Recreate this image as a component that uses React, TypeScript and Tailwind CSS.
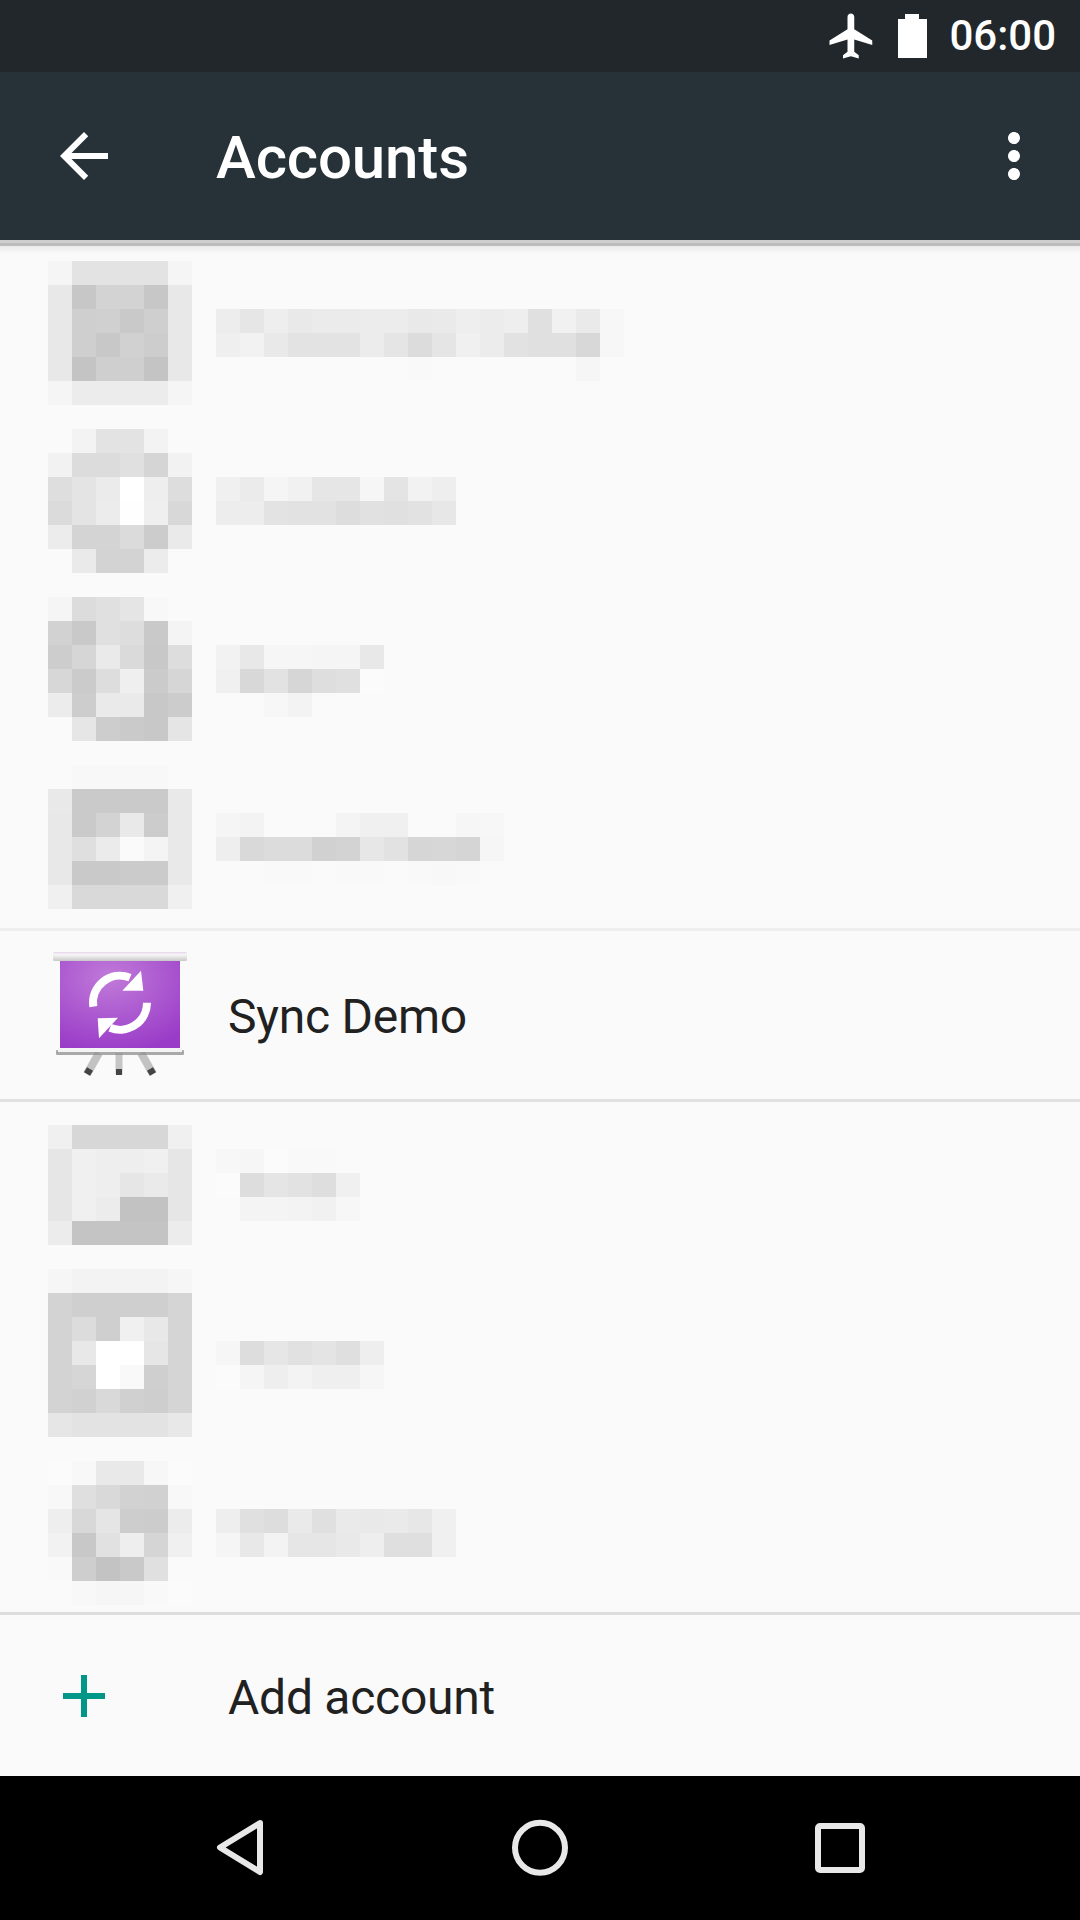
const font = "font-['Roboto',sans-serif]";

// grey levels read off the blurred blocks, one string per row of 24px cells
const accounts: { icon: string[]; label: string[]; labelTop: string }[] = [
  {
    icon: ['f5 e3 e3 e3 e3 f5', 'e8 c7 d3 d3 c7 e8', 'e8 cf d0 c9 cf e8', 'e8 cf c8 d1 cd e8', 'e8 c4 cf cf c4 e8', 'f5 ec ec ec ec f5'],
    label: [
      'ed e6 ee e9 eb eb ec ec e9 ea ee ec ee e0 f1 ea f7',
      'ef f2 e9 e3 e3 e3 ec e5 dc e5 f0 ec e2 e0 e0 d8 f7',
      'fa fa fa fa fa fa fa fa f9 fa fa fa fa fa fa f6 fa',
    ],
    labelTop: 'mt-12',
  },
  {
    icon: ['fa f3 e3 e3 f3 fa', 'f2 dc dc e0 d5 f2', 'de e4 eb ff ee dd', 'db e4 ec fe ef d8', 'ec d4 d4 db cc ea', 'fa ea d3 d3 ec fa'],
    label: ['f0 eb f5 f1 e6 e6 f6 e4 f2 ee', 'ed ed e3 e2 e2 dd e1 e0 e2 e7'],
    labelTop: 'mt-12',
  },
  {
    icon: ['f5 dc e0 e5 f8 fa', 'd2 c9 e0 dd c9 f4', 'cd d6 ea da c8 dd', 'd7 cb dd ef cb d6', 'ec cd ea ea c8 cc', 'fa e6 cd ca c8 e5'],
    label: ['f2 e8 f6 f6 f5 f5 e8', 'f0 d8 e2 d6 de e0 fb', 'fa fa f7 f3 fa fa fa'],
    labelTop: 'mt-12',
  },
  {
    icon: ['fa f8 f8 f8 f8 fa', 'e9 ca ca ca ca e9', 'e8 ca d3 e9 cc e9', 'e8 df eb fa f4 e9', 'e8 c9 c9 cb cb e9', 'f0 d9 d9 d9 d9 f0'],
    label: ['f5 f3 fa fa fa f4 f0 f0 fa fa f6 f7', 'ee d9 dc dc d1 d3 e7 e2 d6 d7 d5 f6', 'fa fa f9 f9 fa f9 f9 fa f9 f8 f9 fa'],
    labelTop: 'mt-12',
  },
];

const otherAccounts: typeof accounts = [
  {
    icon: ['f0 d7 d7 d7 d7 f0', 'e6 f0 ee ee f0 e6', 'e6 f0 ee e6 ea e6', 'e6 f0 ec c2 c2 e6', 'ec c4 c4 c4 c4 ec'],
    label: ['f7 f6 fb f9 f9 fa', 'fb dd e5 e2 de f0', 'fa f4 f4 f3 f1 f7'],
    labelTop: 'mt-6',
  },
  {
    icon: ['f6 f3 f3 f3 f3 f6', 'd3 cf cf cf cf d5', 'd3 dc cf f0 e8 d5', 'd3 e8 ff ff e6 d5', 'd3 d6 ff f9 cf d5', 'd3 d1 d9 d0 ce d5', 'e6 e3 e3 e3 e3 e8'],
    label: ['f6 dd e6 e1 e4 df ee', 'fb f5 ee f3 ef ef f6'],
    labelTop: 'mt-[72px]',
  },
  {
    icon: ['fb f8 e9 e9 f7 fb', 'f8 df d9 d2 d1 f8', 'ee d8 e5 cd cc ec', 'f2 c8 e1 ee d5 f0', 'f9 ce c3 c9 e0 fa', 'fa f8 f6 f6 f9 fb'],
    label: ['ee e0 dd ea e0 ea e9 ea e7 f0', 'f5 e8 f3 e6 e6 e9 ee df df f0'],
    labelTop: 'mt-12',
  },
];

function Mosaic({ rows }: { rows: string[] }) {
  return (
    <div className="flex flex-col">
      {rows.map((row, i) => (
        <div key={i} className="flex">
          {row.split(' ').map((g, j) => (
            <div key={j} className="w-6 h-6" style={{ backgroundColor: `#${g}${g}${g}` }} />
          ))}
        </div>
      ))}
    </div>
  );
}

function BlurredAccount({ icon, label, labelTop }: (typeof accounts)[number]) {
  return (
    <div className="flex items-start gap-6 pl-12">
      <Mosaic rows={icon} />
      <div className={labelTop}>
        <Mosaic rows={label} />
      </div>
    </div>
  );
}

function SyncIcon() {
  return (
    <svg width="144" height="126" viewBox="0 0 144 126" className="shrink-0">
      <defs>
        <radialGradient id="screen" cx="0.42" cy="0.2" r="0.85">
          <stop offset="0" stopColor="#c07ad9" />
          <stop offset="1" stopColor="#9a3cc8" />
        </radialGradient>
        <linearGradient id="bar" x1="0" y1="0" x2="0" y2="1">
          <stop offset="0" stopColor="#e6d3ea" />
          <stop offset="0.3" stopColor="#f6f6f6" />
          <stop offset="1" stopColor="#c8c8c8" />
        </linearGradient>
      </defs>
      {/* legs */}
      <path d="M51 101 L39 122" stroke="#c2c2c2" strokeWidth="8" />
      <path d="M71 101 L71 122" stroke="#c6c6c6" strokeWidth="7" />
      <path d="M93 101 L105 122" stroke="#c2c2c2" strokeWidth="8" />
      <path d="M42 117 L39 122" stroke="#444" strokeWidth="7" />
      <path d="M71 117 L71 123" stroke="#444" strokeWidth="6" />
      <path d="M102 117 L105 122" stroke="#444" strokeWidth="7" />
      {/* screen and bars */}
      <rect x="12" y="8" width="120" height="88" fill="url(#screen)" />
      <rect x="5" y="0" width="134" height="9" rx="1.500" fill="url(#bar)" />
      <rect x="8" y="98" width="128" height="5" rx="1" fill="#8d8d8d" opacity="0.75" />
      <rect x="10" y="96" width="124" height="4" fill="#f4f4f4" />
      {/* sync arrows */}
      <path d="M45.300 54.700 A27 27 0 0 1 82 25.600" fill="none" stroke="#fff" strokeWidth="8" />
      <path d="M93 18.700 L95.300 38.700 L74.300 38.700 Z" fill="#fff" />
      <path d="M99 50.700 A27 27 0 0 1 62 75.800" fill="none" stroke="#fff" strokeWidth="8" />
      <path d="M51 86.300 L49.700 66.300 L70 65.700 Z" fill="#fff" />
    </svg>
  );
}

export default function App() {
  return (
    <div className={`w-[1080px] h-[1920px] flex flex-col bg-[#fafafa] overflow-hidden ${font}`}>
      {/* status bar */}
      <div className="h-[72px] shrink-0 bg-[#21272b] flex items-center justify-end pr-6 text-white">
        <svg width="54" height="54" viewBox="0 0 24 24" fill="currentColor" className="mr-[19px]">
          <path d="M21 16v-2l-8-5V3.500c0-.83-.67-1.500-1.500-1.500S10 2.670 10 3.500V9l-8 5v2l8-2.500V19l-2 1.500V22l3.500-1 3.500 1v-1.500L13 19v-5.500l8 2.500z" />
        </svg>
        {/* battery, square corners */}
        <svg width="29" height="44" viewBox="0 0 29 44" fill="currentColor" className="mr-[22px]">
          <path d="M7 0H21V5H29V44H0V5H7Z" />
        </svg>
        <span className="text-[42px] font-medium leading-none">06:00</span>
      </div>

      {/* app bar */}
      <div className="h-[168px] shrink-0 bg-[#263238] flex items-center text-white relative">
        <svg width="72" height="72" viewBox="0 0 24 24" fill="currentColor" className="ml-12">
          <path d="M20 11H7.830l5.590-5.590L12 4l-8 8 8 8 1.410-1.410L7.830 13H20v-2z" />
        </svg>
        <h1 className="ml-24 pt-1 text-[60px] font-medium leading-none tracking-[-0.15px]">Accounts</h1>
        <svg width="72" height="72" viewBox="0 0 24 24" fill="currentColor" className="ml-auto mr-[30px]">
          <path d="M12 8c1.100 0 2-.9 2-2s-.9-2-2-2-2 .9-2 2 .9 2 2 2zm0 2c-1.100 0-2 .9-2 2s.9 2 2 2 2-.9 2-2-.9-2-2-2zm0 6c-1.100 0-2 .9-2 2s.9 2 2 2 2-.9 2-2-.9-2-2-2z" />
        </svg>
        {/* shadow under the bar */}
        <div className="absolute top-full inset-x-0">
          <div className="h-[3px] bg-[#cfcfcf]" />
          <div className="h-[3px] bg-[#bcbcbc]" />
          <div className="h-2 bg-gradient-to-b from-[#ececec] to-[#fafafa]" />
        </div>
      </div>

      {/* account list */}
      <div className="h-[688px] shrink-0 pt-[21px] flex flex-col gap-6">
        {accounts.map((a, i) => (
          <BlurredAccount key={i} {...a} />
        ))}
      </div>

      <div className="h-[174px] shrink-0 flex items-center border-y-[3px] border-t-[#eeeeee] border-b-[#e0e0e0] pl-12">
        <SyncIcon />
        <span className="ml-9 pt-1 text-[48px] leading-none text-[#212121] tracking-[-0.25px]">Sync Demo</span>
      </div>

      <div className="h-[510px] shrink-0 pt-[23px] flex flex-col gap-6">
        {otherAccounts.map((a, i) => (
          <BlurredAccount key={i} {...a} />
        ))}
      </div>

      <div className="h-[164px] shrink-0 border-t-[3px] border-[#dddddd] flex items-center">
        <svg width="72" height="72" viewBox="0 0 24 24" fill="#009688" className="ml-12">
          <path d="M19 13h-6v6h-2v-6H5v-2h6V5h2v6h6v2z" />
        </svg>
        <span className="ml-[108px] pt-1 text-[48px] leading-none text-[#212121] tracking-[-0.25px]">Add account</span>
      </div>

      {/* nav bar */}
      <div className="h-[144px] shrink-0 bg-black">
        <svg width="1080" height="144" viewBox="0 0 1080 144" fill="none" stroke="#e8e8e8" strokeWidth="6" strokeLinejoin="round">
          <path d="M260 47 L220 71.500 L260 96 Z" />
          <circle cx="540" cy="71.700" r="25" />
          <rect x="818" y="50" width="44" height="44" rx="2" />
        </svg>
      </div>
    </div>
  );
}
